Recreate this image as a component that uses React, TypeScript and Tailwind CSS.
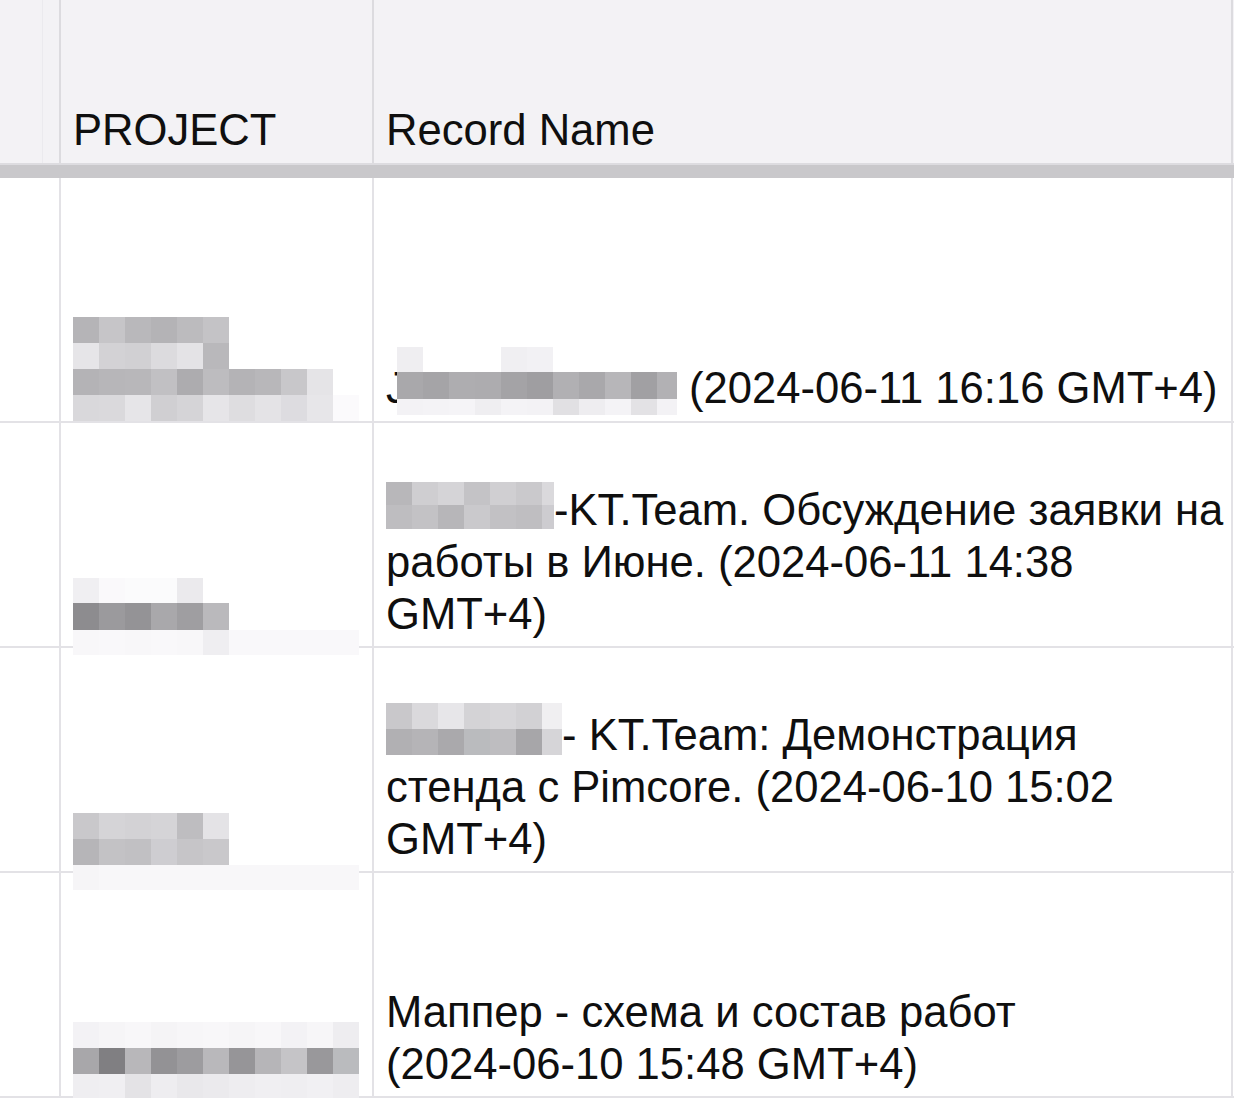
import clsx from 'clsx';

type PixRow = { h: string; cells: string[] };

// pixelated "blurred" patches – each cell is 26px wide unless it carries its own width
function Pixels({ rows, className }: { rows: PixRow[]; className?: string }) {
  return (
    <span className={clsx('flex flex-col', className)}>
      {rows.map((r, i) => (
        <span key={i} className={clsx('flex', r.h)}>
          {r.cells.map((c, j) => (
            <span key={j} className={clsx('block shrink-0', !c.includes('w-[') && 'w-[26px]', c)} />
          ))}
        </span>
      ))}
    </span>
  );
}

const project1: PixRow[] = [
  { h: 'h-[26px]', cells: ['bg-[#b5b4b7]', 'bg-[#c6c5c8]', 'bg-[#b9b8bb]', 'bg-[#b4b3b6]', 'bg-[#bcbbbe]', 'bg-[#c4c3c6]'] },
  { h: 'h-[26px]', cells: ['bg-[#e6e5e8]', 'bg-[#d3d2d5]', 'bg-[#d1d0d3]', 'bg-[#dcdbde]', 'bg-[#e4e3e6]', 'bg-[#b9b8bb]'] },
  {
    h: 'h-[26px]',
    cells: ['bg-[#b4b3b6]', 'bg-[#b7b6b9]', 'bg-[#b8b7ba]', 'bg-[#c1c0c3]', 'bg-[#adacaf]', 'bg-[#bdbcbf]', 'bg-[#b4b3b6]', 'bg-[#b8b7ba]', 'bg-[#c8c7ca]', 'bg-[#e5e4e7]'],
  },
  {
    h: 'h-[26px]',
    cells: ['bg-[#d9d8db]', 'bg-[#dad9dc]', 'bg-[#e6e5e8]', 'bg-[#d0cfd2]', 'bg-[#d5d4d7]', 'bg-[#e6e5e8]', 'bg-[#dedde0]', 'bg-[#e4e3e6]', 'bg-[#dddce0]', 'bg-[#e7e6e9]', 'bg-[#fbfafc]'],
  },
];

const project2: PixRow[] = [
  { h: 'h-[25px]', cells: ['bg-[#f0eff2]', 'bg-[#faf9fb]', 'bg-[#fbfbfc]', 'bg-[#fbfbfc]', 'bg-[#ebeaed]', 'bg-transparent'] },
  { h: 'h-[27px]', cells: ['bg-[#8d8c8f]', 'bg-[#9b9a9d]', 'bg-[#949396]', 'bg-[#a9a8ab]', 'bg-[#9f9ea1]', 'bg-[#bab9bc]'] },
  {
    h: 'h-[25px]',
    cells: ['bg-[#f8f7f9]', 'bg-[#f9f8fa]', 'bg-[#f8f7f9]', 'bg-[#f9f8fa]', 'bg-[#f8f7f9]', 'bg-[#efeef1]', 'bg-[#f9f8fa]', 'bg-[#f9f8fa]', 'bg-[#f9f8fa]', 'bg-[#f9f8fa]', 'bg-[#f9f8fa]'],
  },
];

const project3: PixRow[] = [
  { h: 'h-[26px]', cells: ['bg-[#c9c8cb]', 'bg-[#d5d4d7]', 'bg-[#d3d2d5]', 'bg-[#d5d4d7]', 'bg-[#bebdc0]', 'bg-[#e4e3e6]'] },
  { h: 'h-[26px]', cells: ['bg-[#b6b5b8]', 'bg-[#c3c2c5]', 'bg-[#c1c0c3]', 'bg-[#cecdd1]', 'bg-[#c6c5c8]', 'bg-[#c9c8cb]'] },
  {
    h: 'h-[25px]',
    cells: ['bg-[#f6f5f7]', 'bg-[#f8f7f9]', 'bg-[#f8f7f9]', 'bg-[#f8f7f9]', 'bg-[#f8f7f9]', 'bg-[#f8f7f9]', 'bg-[#f8f7f9]', 'bg-[#f8f7f9]', 'bg-[#f8f7f9]', 'bg-[#f8f7f9]', 'bg-[#f8f7f9]'],
  },
];

const project4: PixRow[] = [
  {
    h: 'h-[26px]',
    cells: ['bg-[#f3f2f5]', 'bg-[#f6f5f7]', 'bg-[#f8f7f9]', 'bg-[#f5f4f6]', 'bg-[#f7f6f8]', 'bg-[#f8f7f9]', 'bg-[#f6f5f7]', 'bg-[#f8f7f9]', 'bg-[#f3f2f5]', 'bg-[#f7f6f8]', 'bg-[#eeedf0]'],
  },
  {
    h: 'h-[26px]',
    cells: ['bg-[#a8a7aa]', 'bg-[#807f82]', 'bg-[#b8b7ba]', 'bg-[#939295]', 'bg-[#9d9c9f]', 'bg-[#b9b8bb]', 'bg-[#969598]', 'bg-[#b6b5b8]', 'bg-[#c5c4c7]', 'bg-[#99989b]', 'bg-[#babbbe]'],
  },
  {
    h: 'h-[26px]',
    cells: ['bg-[#efeef1]', 'bg-[#f0eff2]', 'bg-[#e4e3e6]', 'bg-[#eeedf0]', 'bg-[#e9e8eb]', 'bg-[#ebeaed]', 'bg-[#eeedf0]', 'bg-[#f0eff2]', 'bg-[#efeef1]', 'bg-[#f1f0f3]', 'bg-[#eeedf0]'],
  },
];

const record1: PixRow[] = [
  {
    h: 'h-[25px]',
    cells: ['bg-[#efeef1]', 'bg-transparent', 'bg-transparent', 'bg-transparent', 'bg-[#f0eff2]', 'bg-[#f2f1f4]', 'bg-transparent', 'bg-transparent', 'bg-transparent', 'bg-transparent', 'w-[20px] bg-transparent'],
  },
  {
    h: 'h-[27px]',
    cells: ['bg-[#a9a8ab]', 'bg-[#a5a4a7]', 'bg-[#aeadb0]', 'bg-[#adacaf]', 'bg-[#a4a3a6]', 'bg-[#9f9ea1]', 'bg-[#b1b0b3]', 'bg-[#a9a8ab]', 'bg-[#b7b6b9]', 'bg-[#a1a0a3]', 'w-[20px] bg-[#b2b1b4]'],
  },
  {
    h: 'h-[16px]',
    cells: ['bg-[#f3f2f5]', 'bg-[#f4f3f6]', 'bg-[#f5f4f7]', 'bg-[#efeef1]', 'bg-[#f4f3f6]', 'bg-[#f3f2f5]', 'bg-[#e1e0e3]', 'bg-[#eeedf0]', 'bg-[#f4f3f6]', 'bg-[#e3e2e5]', 'w-[20px] bg-[#f3f2f5]'],
  },
];

const record2: PixRow[] = [
  { h: 'h-[23px]', cells: ['bg-[#b8b7ba]', 'bg-[#cfced1]', 'bg-[#d5d4d7]', 'bg-[#c4c3c6]', 'bg-[#d0cfd2]', 'bg-[#cac9cc]', 'w-[12px] bg-[#dad9dc]'] },
  { h: 'h-[24px]', cells: ['bg-[#bebdc0]', 'bg-[#c3c2c5]', 'bg-[#b7b6b9]', 'bg-[#cac9cc]', 'bg-[#c2c1c4]', 'bg-[#bfbec1]', 'w-[12px] bg-[#cdccd0]'] },
];

const record3: PixRow[] = [
  { h: 'h-[26px]', cells: ['bg-[#c9c8cb]', 'bg-[#dad9dc]', 'bg-[#e7e6e9]', 'bg-[#d4d3d6]', 'bg-[#d7d6d9]', 'bg-[#d2d1d4]', 'w-[20px] bg-[#f0eff1]'] },
  { h: 'h-[26px]', cells: ['bg-[#b1b0b3]', 'bg-[#b5b4b7]', 'bg-[#aaa9ac]', 'bg-[#babbbe]', 'bg-[#bebdc0]', 'bg-[#a7a6a9]', 'w-[20px] bg-[#d6d5d8]'] },
];

function Row({ h, project, children }: { h: string; project: React.ReactNode; children: React.ReactNode }) {
  return (
    <div className={clsx('grid grid-cols-[61px_313px_859px] border-b-2 border-[#e3e2e6]', h)}>
      <div className="border-r-2 border-[#e3e2e6]" />
      <div className="flex flex-col justify-end border-r-2 border-[#e3e2e6] pb-[6px] pl-[12px]">{project}</div>
      <div className="flex flex-col justify-end border-r-2 border-[#e3e2e6] pb-[6px] pl-[12px]">
        <p className="whitespace-nowrap">{children}</p>
      </div>
    </div>
  );
}

export default function App() {
  return (
    <div className="h-[1098px] w-[1234px] overflow-hidden bg-white font-['Liberation_Sans',Arial,sans-serif] text-[43.6px] leading-[52px] text-[#0f0f0f]">
      {/* header */}
      <div className="grid h-[163px] grid-cols-[61px_313px_859px] bg-[#f3f2f5]">
        <div className="flex border-r-2 border-[#dcdbdf]">
          <div className="w-[43px] border-r border-[#ebeaee]" />
        </div>
        <div className="flex items-end border-r-2 border-[#dcdbdf] pb-[7px] pl-[12px]">PROJECT</div>
        <div className="flex items-end border-r-2 border-[#dcdbdf] pb-[7px] pl-[12px]">Record Name</div>
      </div>
      <div className="h-[15px] border-t-2 border-[#dddce0] bg-[#c9c8cb]" />

      <Row h="h-[245px]" project={<Pixels rows={project1} className="mb-[-6px]" />}>
        J
        <span className="ml-[-11px] inline-block overflow-hidden align-[-12px]">
          <Pixels rows={record1} />
        </span>{' '}
        (2024-06-11 16:16 GMT+4)
      </Row>

      <Row h="h-[225px]" project={<Pixels rows={project2} className="mb-[-15px]" />}>
        <span className="inline-block overflow-hidden align-[-4px]">
          <Pixels rows={record2} />
        </span>
        -KT.Team. Обсуждение заявки на
        <br />
        работы в Июне. (2024-06-11 14:38
        <br />
        GMT+4)
      </Row>

      <Row h="h-[225px]" project={<Pixels rows={project3} className="mb-[-25px]" />}>
        <span className="inline-block overflow-hidden align-[-5px]">
          <Pixels rows={record3} />
        </span>
        - KT.Team: Демонстрация
        <br />
        стенда с Pimcore. (2024-06-10 15:02
        <br />
        GMT+4)
      </Row>

      <Row h="h-[225px]" project={<Pixels rows={project4} className="mb-[-10px]" />}>
        Маппер - схема и состав работ
        <br />
        (2024-06-10 15:48 GMT+4)
      </Row>
    </div>
  );
}
